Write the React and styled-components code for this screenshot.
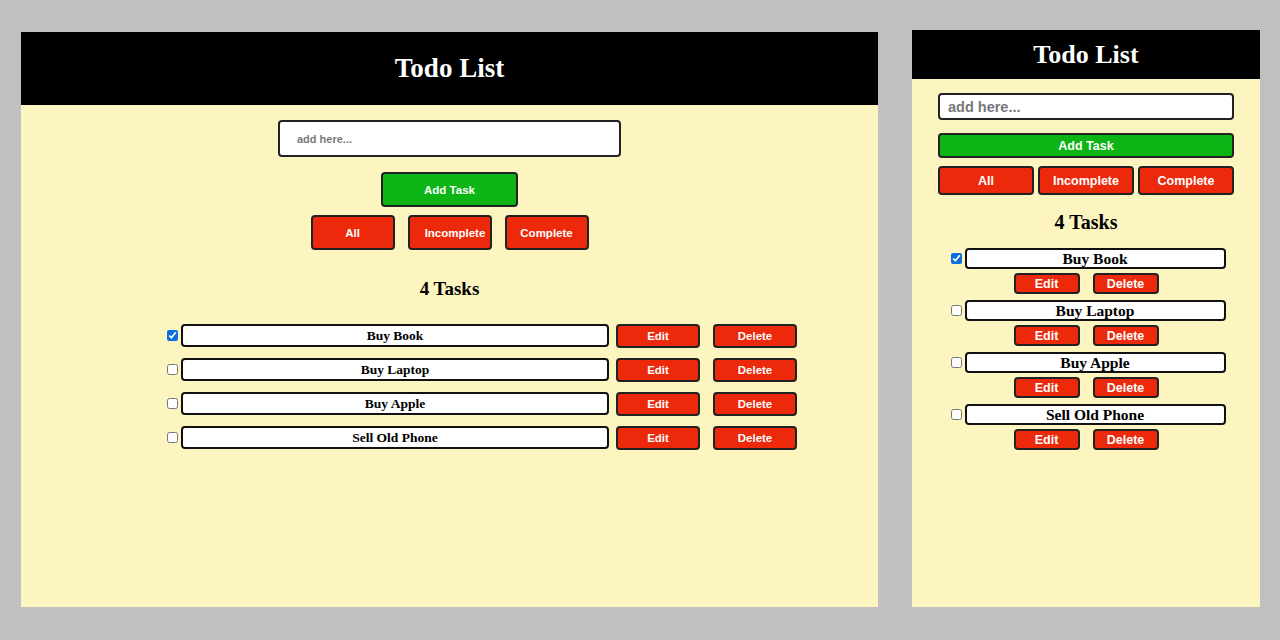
import React, { useState } from 'react';
import styled, { createGlobalStyle, css } from 'styled-components';

const GlobalStyle = createGlobalStyle`
  html, body {
    margin: 0;
    padding: 0;
    background: #c0c0c0;
  }
`;

const RED = '#ec2a0b';
const GREEN = '#0cb515';
const CREAM = '#fcf5c0';

const Page = styled.div`
  display: flex;
  align-items: flex-end;
  gap: 34px;
  height: 640px;
  box-sizing: border-box;
  padding: 0 20px 33px 21px;
`;

const Panel = styled.div`
  display: flex;
  flex-direction: column;
  background: ${CREAM};
  width: ${(p) => (p.$compact ? '348px' : '857px')};
  height: ${(p) => (p.$compact ? '577px' : '575px')};
`;

const Header = styled.header`
  display: flex;
  align-items: center;
  justify-content: center;
  background: #000;
  height: ${(p) => (p.$compact ? '49px' : '73px')};
  flex-shrink: 0;
`;

const Title = styled.h1`
  margin: 0;
  color: #fff;
  font-family: 'Liberation Serif', 'Times New Roman', serif;
  font-weight: bold;
  font-size: ${(p) => (p.$compact ? '26px' : '27px')};
`;

const Body = styled.div`
  display: flex;
  flex-direction: column;
  align-items: center;
  padding: ${(p) => (p.$compact ? '14px 26px 0' : '15px 0 0')};
`;

const Input = styled.input`
  box-sizing: border-box;
  border: 2px solid #222;
  border-radius: 4px;
  background: #fff;
  outline: none;
  font-family: 'Liberation Sans', Arial, sans-serif;
  font-weight: bold;
  ${(p) =>
    p.$compact
      ? css`
          width: 100%;
          height: 27px;
          padding: 0 8px;
          font-size: 14.5px;
        `
      : css`
          width: 343px;
          height: 37px;
          padding: 0 17px;
          font-size: 11px;
        `}

  &::placeholder {
    color: #777;
  }
`;

const Button = styled.button`
  box-sizing: border-box;
  border: 2px solid #222;
  border-radius: 4px;
  color: #fff;
  background: ${(p) => (p.$green ? GREEN : RED)};
  font-family: 'Liberation Sans', Arial, sans-serif;
  font-weight: bold;
  font-size: ${(p) => (p.$compact ? '12.5px' : '11.5px')};
  padding: 0;
  cursor: pointer;
`;

const AddButton = styled(Button)`
  ${(p) =>
    p.$compact
      ? css`
          width: 100%;
          height: 25px;
          margin-top: 13px;
        `
      : css`
          width: 137px;
          height: 35px;
          margin-top: 15px;
        `}
`;

const Filters = styled.div`
  display: flex;
  margin-top: 8px;
  ${(p) =>
    p.$compact
      ? css`
          width: 100%;
          gap: 4px;
        `
      : css`
          gap: 13px;
        `}
`;

const FilterButton = styled(Button)`
  ${(p) =>
    p.$compact
      ? css`
          flex: 1;
          height: 29px;
        `
      : css`
          width: 84px;
          height: 35px;
          padding-left: ${p.$indent ? '11px' : '0'};
        `}
`;

const Count = styled.h2`
  margin: ${(p) => (p.$compact ? '15px 0 14px' : '28px 0 23px')};
  font-family: 'Liberation Serif', 'Times New Roman', serif;
  font-weight: bold;
  font-size: ${(p) => (p.$compact ? '20px' : '19px')};
  line-height: 1.2;
  color: #000;
`;

const List = styled.ul`
  list-style: none;
  margin: 0;
  padding: ${(p) => (p.$compact ? '0' : '0 0 0 61px')};
  align-self: stretch;
  display: flex;
  flex-direction: column;
  align-items: center;
  gap: ${(p) => (p.$compact ? '6px' : '10px')};
`;

const Item = styled.li`
  display: flex;
  flex-direction: ${(p) => (p.$compact ? 'column' : 'row')};
  align-items: center;
  gap: ${(p) => (p.$compact ? '4px' : '0')};
`;

const TaskLine = styled.div`
  display: flex;
  align-items: center;
`;

const Check = styled.input`
  width: 11px;
  height: 11px;
  margin: 3px 3px 3px 4px;
  accent-color: #0b6fe0;
`;

const TaskText = styled.div`
  box-sizing: border-box;
  display: flex;
  align-items: center;
  justify-content: center;
  background: #fff;
  border: 2px solid #111;
  border-radius: 4px;
  font-family: 'Liberation Serif', 'Times New Roman', serif;
  font-weight: bold;
  color: #000;
  ${(p) =>
    p.$compact
      ? css`
          width: 261px;
          height: 21px;
          font-size: 15.5px;
        `
      : css`
          width: 428px;
          height: 23px;
          font-size: 13.5px;
        `}
`;

const Actions = styled.div`
  display: flex;
  gap: 13px;
  margin-left: ${(p) => (p.$compact ? '0' : '7px')};
`;

const ActionButton = styled(Button)`
  ${(p) =>
    p.$compact
      ? css`
          width: 66px;
          height: 21px;
        `
      : css`
          width: 84px;
          height: 24px;
        `}
`;

const initialTasks = [
  { id: 1, text: 'Buy Book', done: true },
  { id: 2, text: 'Buy Laptop', done: false },
  { id: 3, text: 'Buy Apple', done: false },
  { id: 4, text: 'Sell Old Phone', done: false },
];

const Todo = ({ compact }) => {
  const [tasks, setTasks] = useState(initialTasks);

  const toggle = (id) =>
    setTasks((list) =>
      list.map((t) => (t.id === id ? { ...t, done: !t.done } : t))
    );

  return (
    <Panel $compact={compact}>
      <Header $compact={compact}>
        <Title $compact={compact}>Todo List</Title>
      </Header>
      <Body $compact={compact}>
        <Input $compact={compact} placeholder="add here..." />
        <AddButton $compact={compact} $green>
          Add Task
        </AddButton>
        <Filters $compact={compact}>
          <FilterButton $compact={compact}>All</FilterButton>
          <FilterButton $compact={compact} $indent>
            Incomplete
          </FilterButton>
          <FilterButton $compact={compact}>Complete</FilterButton>
        </Filters>
        <Count $compact={compact}>{tasks.length} Tasks</Count>
        <List $compact={compact}>
          {tasks.map((t) => (
            <Item key={t.id} $compact={compact}>
              <TaskLine>
                <Check
                  type="checkbox"
                  checked={t.done}
                  onChange={() => toggle(t.id)}
                />
                <TaskText $compact={compact}>{t.text}</TaskText>
              </TaskLine>
              <Actions $compact={compact}>
                <ActionButton $compact={compact}>Edit</ActionButton>
                <ActionButton $compact={compact}>Delete</ActionButton>
              </Actions>
            </Item>
          ))}
        </List>
      </Body>
    </Panel>
  );
};

const App = () => (
  <>
    <GlobalStyle />
    <Page>
      <Todo />
      <Todo compact />
    </Page>
  </>
);

export default App;
